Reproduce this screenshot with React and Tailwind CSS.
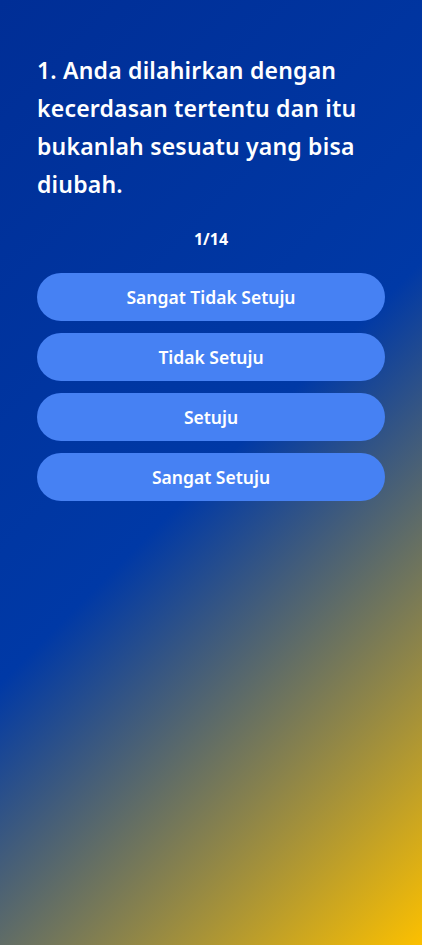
export default function App() {
  const options = ["Sangat Tidak Setuju", "Tidak Setuju", "Setuju", "Sangat Setuju"];
  return (
    <div
      className="min-h-[945px] w-full bg-[linear-gradient(135deg,#002e96_0%,#0039a6_50%,#fcc000_100%)] px-[37px] pt-[51px] text-white"
      style={{ fontFamily: '"Noto Sans", "Open Sans", sans-serif' }}
    >
      <h2 className="text-[23px] font-semibold leading-[38px] tracking-[0.2px]">
        1. Anda dilahirkan dengan kecerdasan tertentu dan itu bukanlah sesuatu yang bisa diubah.
      </h2>
      <div className="mt-[24px] text-center text-[16px] font-bold leading-[24px]">1/14</div>
      <div className="mt-[22px] flex flex-col gap-[12px]">
        {options.map((o) => (
          <button
            key={o}
            className="h-[48px] w-full rounded-full bg-[#4681f3] text-[17.5px] font-semibold text-white"
          >
            {o}
          </button>
        ))}
      </div>
    </div>
  );
}
